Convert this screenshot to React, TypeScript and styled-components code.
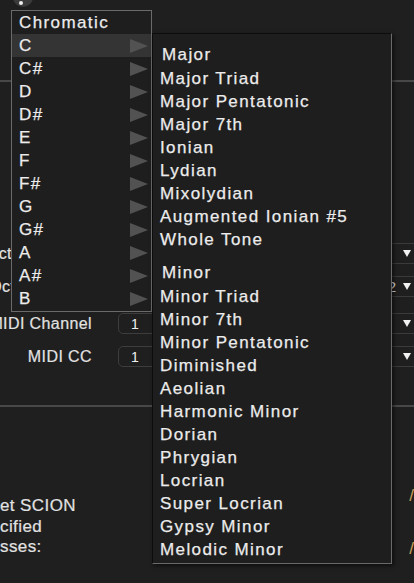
import React from 'react';
import styled, { createGlobalStyle } from 'styled-components';

const GlobalStyle = createGlobalStyle`
  html, body {
    margin: 0;
    padding: 0;
    background: #1f1f1f;
    overflow: hidden;
  }
  body {
    font-family: "Liberation Sans", Arial, sans-serif;
    color: #e6e6e6;
  }
`;

const ROOTS = ['C', 'C#', 'D', 'D#', 'E', 'F', 'F#', 'G', 'G#', 'A', 'A#', 'B'];

const SCALES = [
  {
    title: 'Major',
    items: ['Major Triad', 'Major Pentatonic', 'Major 7th', 'Ionian', 'Lydian', 'Mixolydian', 'Augmented Ionian #5', 'Whole Tone'],
  },
  {
    title: 'Minor',
    items: ['Minor Triad', 'Minor 7th', 'Minor Pentatonic', 'Diminished', 'Aeolian', 'Harmonic Minor', 'Dorian', 'Phrygian', 'Locrian', 'Super Locrian', 'Gypsy Minor', 'Melodic Minor'],
  },
];

// Background panel
const Page = styled.div`
  position: relative;
  width: 414px;
  height: 583px;
  overflow: hidden;
  background: #1f1f1f;
`;

const Header = styled.div`
  display: flex;
  align-items: flex-start;
  height: 80px;
  padding-left: 13px;
  box-sizing: border-box;
`;

const LogoButton = styled.div`
  width: 20px;
  height: 20px;
  margin-top: -13px;
  border-radius: 50%;
  background: #3b3b3b;
  display: flex;
  align-items: flex-end;
  justify-content: center;
  padding-bottom: 2px;
  box-sizing: border-box;
  span {
    width: 4px;
    height: 4px;
    border-radius: 50%;
    background: #f0f0f0;
    margin-left: -4px;
  }
`;

const Divider = styled.div`
  height: 2px;
  background: #484848;
`;

const Settings = styled.div`
  padding-top: 149px;
  height: 323px;
  box-sizing: border-box;
`;

const Row = styled.div<{ $gap: number }>`
  display: flex;
  align-items: center;
  height: 21px;
  margin-top: ${p => p.$gap}px;
`;

const Label = styled.div`
  width: 92px;
  flex: none;
  display: flex;
  justify-content: flex-end;
  white-space: nowrap;
  font-size: 16px;
  letter-spacing: 0.4px;
  color: #e2e2e2;
  -webkit-text-stroke: 0.2px #e2e2e2;
`;

const NumberBox = styled.div`
  margin-left: 26px;
  width: 40px;
  height: 21px;
  box-sizing: border-box;
  border: 1px solid #3d3d3d;
  border-radius: 5px;
  font-size: 14px;
  display: flex;
  align-items: center;
  padding-left: 12px;
  color: #f0f0f0;
  flex: none;
`;

const Combo = styled.div`
  margin-left: auto;
  margin-right: -6px;
  width: 250px;
  height: 21px;
  box-sizing: border-box;
  border-top: 1px solid #3a3a3a;
  border-bottom: 1px solid #3a3a3a;
  display: flex;
  align-items: center;
  justify-content: flex-end;
  gap: 7px;
  padding-right: 9px;
  font-size: 15px;
  color: #e6e6e6;
`;

const ComboArrow = styled.span`
  width: 0;
  height: 0;
  border-left: 4px solid transparent;
  border-right: 4px solid transparent;
  border-top: 7px solid #f2f2f2;
`;

const Footer = styled.div`
  padding-top: 89px;
  display: flex;
  justify-content: space-between;
`;

const Note = styled.div`
  font-size: 17px;
  line-height: 20.5px;
  letter-spacing: 0.4px;
  color: #e2e2e2;
  -webkit-text-stroke: 0.2px #e2e2e2;
`;

const Paths = styled.div`
  display: flex;
  flex-direction: column;
  gap: 33px;
  margin-top: -10px;
  font-size: 17px;
  color: #caa05c;
`;

// Popup menus (lie over the panel)
const RootMenu = styled.div`
  position: absolute;
  left: 11px;
  top: 10px;
  width: 141px;
  box-sizing: border-box;
  border: 1px solid #6a6a6a;
  background: #1e1e1e;
  padding-bottom: 1px;
`;

const MenuItem = styled.div<{ $active?: boolean }>`
  height: 23px;
  display: flex;
  align-items: center;
  justify-content: space-between;
  padding: 0 3px 0 7px;
  font-size: 17px;
  letter-spacing: 1.4px;
  color: #ececec;
  -webkit-text-stroke: 0.25px #ececec;
  background: ${p => (p.$active ? '#343434' : 'transparent')};
`;

const SubArrow = styled.span`
  width: 0;
  height: 0;
  border-top: 7px solid transparent;
  border-bottom: 7px solid transparent;
  border-left: 18px solid #525252;
`;

const ScaleMenu = styled.div`
  position: absolute;
  left: 152px;
  top: 33px;
  width: 240px;
  box-sizing: border-box;
  border: 1px solid #6a6a6a;
  border-top-color: #0c0c0c;
  border-left-color: #0c0c0c;
  background: #1e1e1e;
  padding: 9px 0 2px;
  box-shadow: 2px 2px 4px rgba(0, 0, 0, 0.55);
`;

const Section = styled.div`
  & + & {
    margin-top: 10px;
  }
`;

const SectionTitle = styled.div`
  height: 24px;
  display: flex;
  align-items: center;
  padding-left: 9px;
  font-size: 17px;
  letter-spacing: 1.4px;
  color: #ececec;
  -webkit-text-stroke: 0.25px #ececec;
`;

const ScaleItem = styled.div`
  height: 23px;
  display: flex;
  align-items: center;
  padding-left: 7px;
  font-size: 17px;
  letter-spacing: 1.4px;
  color: #ececec;
  -webkit-text-stroke: 0.25px #ececec;
`;

export default function App() {
  return (
    <>
      <GlobalStyle />
      <Page>
        <Header>
          <LogoButton><span /></LogoButton>
        </Header>
        <Divider />
        <Settings>
          <Row $gap={12}>
            <Label>Pitch Correct Key Mode</Label>
            <Combo><ComboArrow /></Combo>
          </Row>
          <Row $gap={12}>
            <Label>Octave Offset</Label>
            <Combo>2<ComboArrow /></Combo>
          </Row>
          <Row $gap={16}>
            <Label>MIDI Channel</Label>
            <NumberBox>1</NumberBox>
            <Combo><ComboArrow /></Combo>
          </Row>
          <Row $gap={12}>
            <Label>MIDI CC</Label>
            <NumberBox>1</NumberBox>
            <Combo><ComboArrow /></Combo>
          </Row>
        </Settings>
        <Divider />
        <Footer>
          <Note>
            <div>et SCION</div>
            <div>cified</div>
            <div>sses:</div>
          </Note>
          <Paths>
            <span>/</span>
            <span>/</span>
          </Paths>
        </Footer>

        <RootMenu>
          <MenuItem>Chromatic</MenuItem>
          {ROOTS.map(r => (
            <MenuItem key={r} $active={r === 'C'}>
              {r}
              <SubArrow />
            </MenuItem>
          ))}
        </RootMenu>

        <ScaleMenu>
          {SCALES.map(s => (
            <Section key={s.title}>
              <SectionTitle>{s.title}</SectionTitle>
              {s.items.map(i => (
                <ScaleItem key={i}>{i}</ScaleItem>
              ))}
            </Section>
          ))}
        </ScaleMenu>
      </Page>
    </>
  );
}
